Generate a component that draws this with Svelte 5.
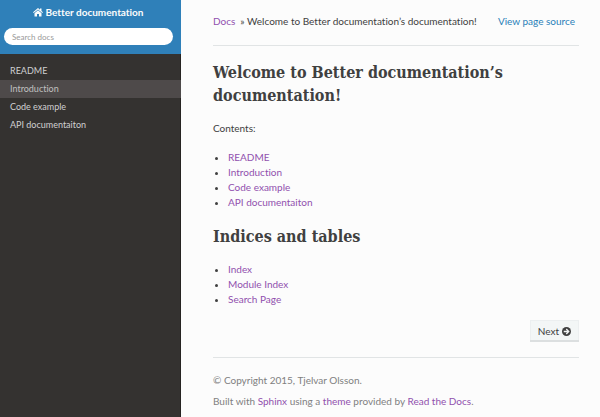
<script>
  const pages = ['README', 'Introduction', 'Code example', 'API documentaiton'];
  const indices = ['Index', 'Module Index', 'Search Page'];
  const current = 'Introduction';
</script>

<div class="layout">
  <aside>
    <div class="brand">
      <a class="home" href="#home">
        <svg viewBox="0 0 20 18" width="10" height="9" aria-hidden="true">
          <path d="M10 0 0 8.5 1.4 10 10 2.8 18.6 10 20 8.5 17 6V1h-3v2.5z" />
          <path d="M10 4.4 3 10.3V17h5v-5h4v5h5v-6.7z" />
        </svg>
        Better documentation
      </a>
      <input type="search" placeholder="Search docs" aria-label="Search docs" />
    </div>
    <nav aria-label="Documentation">
      {#each pages as page}
        <a href="#{page}" class:current={page === current}>{page}</a>
      {/each}
    </nav>
  </aside>

  <main>
    <header>
      <span><a class="docs" href="#docs">Docs</a>» Welcome to Better documentation’s documentation!</span>
      <a class="source" href="#source">View page source</a>
    </header>

    <h1>Welcome to Better documentation’s documentation!</h1>
    <p class="contents">Contents:</p>
    <ul>
      {#each pages as page}
        <li><a href="#{page}">{page}</a></li>
      {/each}
    </ul>

    <h1>Indices and tables</h1>
    <ul>
      {#each indices as item}
        <li><a href="#{item}">{item}</a></li>
      {/each}
    </ul>

    <footer>
      <div class="pager">
        <button type="button">
          Next
          <svg viewBox="0 0 18 18" width="9" height="9" aria-hidden="true">
            <circle cx="9" cy="9" r="9" />
            <path d="M3.5 9H13M8.5 4 13.5 9l-5 5" fill="none" stroke="#f3f6f6" stroke-width="2.6" />
          </svg>
        </button>
      </div>
      <div class="legal">
        <p>© Copyright 2015, Tjelvar Olsson.</p>
        <p>
          Built with <a href="#sphinx">Sphinx</a> using a <a href="#theme">theme</a> provided by
          <a href="#rtd">Read the Docs</a>.
        </p>
      </div>
    </footer>
  </main>
</div>

<style>
  :global(body) {
    background: #fcfcfc;
  }
  .layout {
    display: flex;
    min-height: 100vh;
    font: 10px/15px Lato, sans-serif;
    font-variant-ligatures: none;
    color: #404040;
  }
  a {
    color: #9150ae;
    text-decoration: none;
  }
  aside {
    flex: 0 0 181px;
    box-sizing: border-box;
    background: #343230;
    border-right: 1px solid #262422;
  }
  .brand {
    display: flex;
    flex-direction: column;
    gap: 8px;
    margin-right: -1px;
    padding: 5px 8px 9px 4px;
    background: #2f80b9;
  }
  .home {
    display: flex;
    align-items: center;
    justify-content: center;
    gap: 2px;
    color: #fcfcfc;
    font-weight: 700;
  }
  .home svg,
  button svg {
    fill: currentColor;
  }
  input {
    width: 100%;
    height: 17px;
    box-sizing: border-box;
    padding: 0 8px;
    border: 0;
    border-radius: 9px;
    background: #fff;
    font: 8px Lato, sans-serif;
    outline: none;
  }
  input::placeholder {
    color: #999;
  }
  nav {
    display: flex;
    flex-direction: column;
    margin: 8px -1px 0 0;
  }
  nav a {
    padding: 0 10px;
    font-size: 9px;
    line-height: 18px;
    color: #d0d0d0;
  }
  nav .current {
    background: #4e4a4a;
    color: #c0c0c0;
  }
  main {
    flex: 1;
    min-width: 0;
    padding: 14px 21px 8px 32px;
  }
  header {
    display: flex;
    justify-content: space-between;
    padding: 0 4px 16px 0;
    border-bottom: 1px solid #e1e4e5;
  }
  .docs {
    margin-right: 5px;
  }
  .source {
    color: #2980b9;
  }
  h1 {
    margin: 15px 0 14px;
    font: 700 16px/23px "DejaVu Serif Condensed", "DejaVu Serif", serif;
    font-stretch: condensed;
  }
  p {
    margin: 0;
  }
  ul {
    margin: 14px 0 13px;
    padding-left: 15px;
  }
  .pager {
    display: flex;
    justify-content: flex-end;
    padding-bottom: 15px;
    border-bottom: 1px solid #e1e4e5;
  }
  button {
    display: flex;
    align-items: center;
    gap: 3px;
    padding: 3px 8px;
    border: 0;
    background: #f3f6f6;
    box-shadow: inset 0 -2px #dcdfe0, inset 0 0 0 1px #eceff0;
    color: #404040;
    font: 10px/16px Lato, sans-serif;
  }
  .legal {
    display: flex;
    flex-direction: column;
    gap: 6px;
    padding-top: 15px;
    color: #808080;
  }
</style>
